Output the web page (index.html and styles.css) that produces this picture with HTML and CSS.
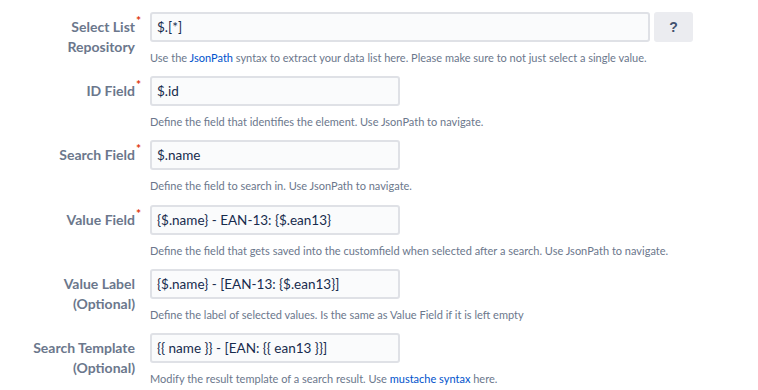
FILE: index.html
```html
<!DOCTYPE html>
<html lang="en">
<head>
  <meta charset="UTF-8" />
  <meta name="viewport" content="width=device-width, initial-scale=1.0"/>
  <title>Select List Configuration</title>
  <link rel="stylesheet" href="styles.css">
</head>
<body>

  <form class="config-form">
    <div class="field-row">
      <label class="field-label required" for="repo">Select List Repository</label>
      <div class="field-body">
        <div class="input-line">
          <input type="text" id="repo" class="text-input wide" value="$.[*]">
          <button type="button" class="help-btn">?</button>
        </div>
        <div class="description">Use the <a href="#">JsonPath</a> syntax to extract your data list here. Please make sure to not just select a single value.</div>
      </div>
    </div>

    <div class="field-row">
      <label class="field-label required" for="id-field">ID Field</label>
      <div class="field-body">
        <input type="text" id="id-field" class="text-input" value="$.id">
        <div class="description">Define the field that identifies the element. Use JsonPath to navigate.</div>
      </div>
    </div>

    <div class="field-row">
      <label class="field-label required" for="search-field">Search Field</label>
      <div class="field-body">
        <input type="text" id="search-field" class="text-input" value="$.name">
        <div class="description">Define the field to search in. Use JsonPath to navigate.</div>
      </div>
    </div>

    <div class="field-row">
      <label class="field-label required" for="value-field">Value Field</label>
      <div class="field-body">
        <input type="text" id="value-field" class="text-input" value="{$.name} - EAN-13: {$.ean13}">
        <div class="description">Define the field that gets saved into the customfield when selected after a search. Use JsonPath to navigate.</div>
      </div>
    </div>

    <div class="field-row">
      <label class="field-label" for="value-label">Value Label (Optional)</label>
      <div class="field-body">
        <input type="text" id="value-label" class="text-input" value="{$.name} - [EAN-13: {$.ean13}]">
        <div class="description">Define the label of selected values. Is the same as Value Field if it is left empty</div>
      </div>
    </div>

    <div class="field-row">
      <label class="field-label" for="search-template">Search Template (Optional)</label>
      <div class="field-body">
        <input type="text" id="search-template" class="text-input" value="{{ name }} - [EAN: {{ ean13 }}]">
        <div class="description">Modify the result template of a search result. Use <a href="#">mustache syntax</a> here.</div>
      </div>
    </div>
  </form>

</body>
</html>
```

FILE: styles.css
```css
body {
  font-family: Lato, "Open Sans", Arial, sans-serif;
  font-size: 14px;
  color: #172b4d;
  background: #fff;
  margin: 0;
}
.config-form {
  padding-top: 12px;
}
.field-row {
  display: flex;
  align-items: flex-start;
  margin-bottom: 10.2px;
}
.field-label {
  position: relative;
  flex: 0 0 135px;
  box-sizing: border-box;
  padding-left: 25px;
  margin-right: 15px;
  padding-top: 5px;
  text-align: right;
  font-size: 14px;
  font-weight: 700;
  line-height: 20px;
  color: #6b778c;
}
.field-label.required::after {
  content: "*";
  position: absolute;
  right: -6px;
  top: 3px;
  font-size: 12px;
  line-height: 12px;
  color: #de350b;
}
.field-body {
  flex: 1;
}
.input-line {
  display: flex;
  gap: 4px;
}
.text-input {
  box-sizing: border-box;
  width: 250px;
  height: 30px;
  padding: 0 5px;
  font-family: inherit;
  font-size: 13.5px;
  color: #172b4d;
  background: #fafbfc;
  border: 2px solid #dfe1e6;
  border-radius: 3px;
}
.text-input.wide {
  width: 500px;
}
.help-btn {
  width: 39px;
  height: 30px;
  border: none;
  border-radius: 3px;
  background: #ebecf0;
  color: #42526e;
  font-family: Arial, sans-serif;
  font-size: 14px;
  font-weight: bold;
  cursor: pointer;
}
.description {
  margin-top: 8px;
  font-size: 11px;
  line-height: 16px;
  color: #6b778c;
}
.description a {
  color: #0052cc;
  text-decoration: none;
}
```
